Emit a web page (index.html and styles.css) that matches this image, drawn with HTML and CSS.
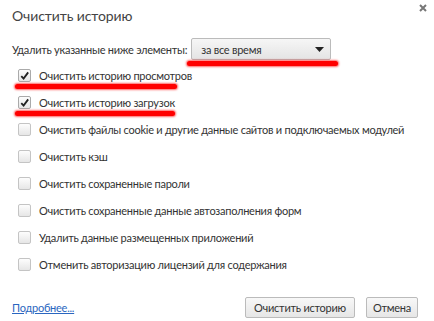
FILE: index.html
```html
<!DOCTYPE html>
<html lang="ru">
<head>
<meta charset="utf-8">
<link rel="stylesheet" href="styles.css">
</head>
<body>
<div class="dialog">
  <div class="header">
    <div class="title">Очистить историю</div>
    <svg class="close" width="8" height="8" viewBox="0 0 8 8"><path d="M1 1L7 7M7 1L1 7" stroke="#777" stroke-width="2"/></svg>
  </div>
  <div class="period">
    <span class="period-label">Удалить указанные ниже элементы:</span>
    <div class="select">
      <span>за все время</span>
      <svg class="arrow" width="9" height="5" viewBox="0 0 9 5"><path d="M0 0H9L4.5 5Z" fill="#222"/></svg>
      <span class="mark mark-select"></span>
    </div>
  </div>
  <ul class="options">
    <li class="option"><span class="box checked"><svg width="12" height="12" viewBox="0 0 12 12"><path d="M2.5 6.2L5 8.8L10 2" fill="none" stroke="#222" stroke-width="2"/></svg></span><span>Очистить историю просмотров</span><span class="mark mark-1"></span></li>
    <li class="option"><span class="box checked"><svg width="12" height="12" viewBox="0 0 12 12"><path d="M2.5 6.2L5 8.8L10 2" fill="none" stroke="#222" stroke-width="2"/></svg></span><span>Очистить историю загрузок</span><span class="mark mark-2"></span></li>
    <li class="option"><span class="box"></span><span>Очистить файлы cookie и другие данные сайтов и подключаемых модулей</span></li>
    <li class="option"><span class="box"></span><span>Очистить кэш</span></li>
    <li class="option"><span class="box"></span><span>Очистить сохраненные пароли</span></li>
    <li class="option"><span class="box"></span><span>Очистить сохраненные данные автозаполнения форм</span></li>
    <li class="option"><span class="box"></span><span>Удалить данные размещенных приложений</span></li>
    <li class="option"><span class="box"></span><span>Отменить авторизацию лицензий для содержания</span></li>
  </ul>
  <div class="footer">
    <a class="more" href="#">Подробнее...</a>
    <div class="buttons">
      <button class="btn">Очистить историю</button>
      <button class="btn">Отмена</button>
    </div>
  </div>
</div>
</body>
</html>
```
FILE: styles.css
```css
* { box-sizing: border-box; }
html, body { margin: 0; padding: 0; background: #fff; }
body {
  font-family: "Lato", "Open Sans", sans-serif;
  font-size: 11px;
  letter-spacing: -0.25px;
  color: #333;
  width: 434px;
  height: 321px;
  overflow: hidden;
  white-space: nowrap;
}
.dialog {
  padding: 0 12px 0 12px;
  display: flex;
  flex-direction: column;
  height: 321px;
}
.header {
  display: flex;
  justify-content: space-between;
  align-items: flex-start;
  height: 38px;
}
.title {
  font-size: 14px;
  letter-spacing: -0.1px;
  color: #444;
  margin-top: 7px;
}
.close {
  display: block;
  margin-top: 4px;
  margin-right: -5px;
}
.period {
  display: flex;
  align-items: center;
  height: 22px;
}
.period-label { margin-right: 4px; color: #333; }
.select {
  position: relative;
  width: 140px;
  height: 22px;
  border: 1px solid #bbb;
  border-radius: 2px;
  background: linear-gradient(#f6f6f6, #e4e4e4);
  display: flex;
  align-items: center;
  justify-content: space-between;
  padding: 0 6px 0 9px;
  color: #333;
}
.arrow { margin-top: 1px; }
.mark {
  position: absolute;
  height: 5px;
  background: #f00;
  border-radius: 3px;
  box-shadow: 0 0 2px 1px rgba(255,0,0,0.6);
}
.mark-select { left: -5px; right: -8px; top: 22px; }
.options {
  list-style: none;
  margin: 2px 0 0 0;
  padding: 0;
}
.option {
  position: relative;
  display: flex;
  align-items: center;
  height: 27px;
  padding-left: 6px;
  color: #333;
}
.box {
  width: 13px;
  height: 13px;
  border: 1px solid #c4c4c4;
  border-radius: 2px;
  background: linear-gradient(#fdfdfd, #e6e6e6);
  margin-right: 8px;
  display: flex;
  align-items: center;
  justify-content: center;
  flex: none;
}
.box.checked { border-color: #aaa; }
.box svg { display: block; }
.mark-1 { left: 3px; width: 162px; top: 22px; }
.mark-2 { left: 3px; width: 160px; top: 22px; }
.footer {
  margin-top: auto;
  display: flex;
  justify-content: space-between;
  align-items: center;
  height: 28px;
}
.more {
  color: #2a66c0;
  text-decoration: underline;
}
.buttons { display: flex; gap: 11px; margin-right: 4px; }
.btn {
  font-family: inherit;
  font-size: 11px;
  letter-spacing: -0.25px;
  color: #333;
  height: 21px;
  border: 1px solid #bbb;
  border-radius: 2px;
  background: linear-gradient(#f8f8f8, #e6e6e6);
  padding: 0;
}
.btn:first-child { width: 110px; }
.btn:last-child { width: 52px; }
```
